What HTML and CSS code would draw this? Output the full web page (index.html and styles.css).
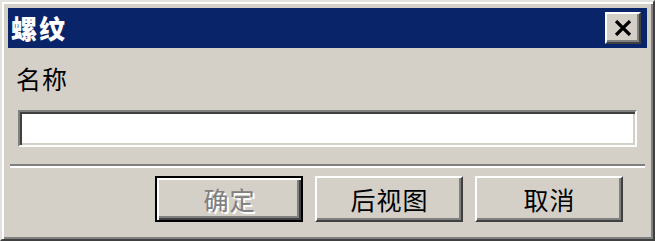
FILE: index.html
```html
<!DOCTYPE html>
<html>
<head>
<meta charset="utf-8">
<link rel="stylesheet" href="styles.css">
</head>
<body>
<div class="window">
  <div class="titlebar">
    <span class="title">螺纹</span>
    <button class="close" aria-label="关闭">
      <svg width="18" height="16" viewBox="0 0 18 16"><path d="M2 1 L16 15 M16 1 L2 15" stroke="#000" stroke-width="3.2" fill="none"/></svg>
    </button>
  </div>
  <div class="body">
    <div class="label">名称</div>
    <div class="field"></div>
  </div>
  <div class="sep"></div>
  <div class="buttons">
    <button class="btn default disabled">确定</button>
    <button class="btn">后视图</button>
    <button class="btn">取消</button>
  </div>
</div>
</body>
</html>
```

FILE: styles.css
```css
html, body {
  margin: 0;
  padding: 0;
  background: #d4d0c8;
}
body {
  font-family: "Noto Sans CJK SC", "Noto Sans", sans-serif;
}
.window {
  width: 655px;
  height: 241px;
  box-sizing: border-box;
  background: #d4d0c8;
  border-style: solid;
  border-width: 2px;
  border-color: #e4e2de #404040 #404040 #e4e2de;
  box-shadow: inset 2px 2px 0 #ffffff, inset -2px -2px 0 #808080;
  padding: 6px 6px 0 6px;
  display: flex;
  flex-direction: column;
}
.titlebar {
  height: 40px;
  background: #0a246a;
  display: flex;
  align-items: center;
  justify-content: space-between;
  padding: 0 6px 0 3px;
}
.title {
  color: #ffffff;
  font-weight: 900;
  font-size: 26px;
  line-height: 1;
  letter-spacing: 2px;
}
.close {
  width: 36px;
  height: 32px;
  box-sizing: border-box;
  padding: 0;
  margin: 0;
  background: #d4d0c8;
  border-style: solid;
  border-width: 2px;
  border-color: #ffffff #404040 #404040 #ffffff;
  box-shadow: inset -2px -2px 0 #808080;
  display: flex;
  align-items: center;
  justify-content: center;
}
.body {
  padding: 16px 10px 0 10px;
}
.label {
  font-size: 25px;
  line-height: 28px;
  color: #000;
  margin-bottom: 18px;
  margin-left: -2px;
  letter-spacing: 1px;
}
.field {
  height: 37px;
  box-sizing: border-box;
  background: #ffffff;
  border-style: solid;
  border-width: 2px;
  border-color: #808080 #ffffff #ffffff #808080;
  box-shadow: inset 2px 2px 0 #404040, inset -2px -2px 0 #d4d0c8;
}
.sep {
  margin: 17px 2px 0 2px;
  height: 0;
  border-top: 2px solid #808080;
  border-bottom: 2px solid #ffffff;
}
.buttons {
  display: flex;
  justify-content: flex-end;
  gap: 12px;
  padding: 8px 24px 0 0;
}
.btn {
  width: 148px;
  height: 46px;
  box-sizing: border-box;
  margin: 0;
  padding: 0 0 0 1px;
  background: #d4d0c8;
  font-family: "Noto Sans CJK SC", sans-serif;
  font-size: 25px;
  letter-spacing: 1px;
  color: #000;
  border-style: solid;
  border-width: 2px;
  border-color: #ffffff #404040 #404040 #ffffff;
  box-shadow: inset -2px -2px 0 #808080, inset 2px 2px 0 #d4d0c8;
}
.btn.default {
  border: 2px solid #000;
  box-shadow: inset 2px 2px 0 #ffffff, inset -2px -2px 0 #404040, inset -4px -4px 0 #808080;
}
.btn.disabled {
  color: #808080;
  text-shadow: 2px 2px 0 #ffffff;
}
```
